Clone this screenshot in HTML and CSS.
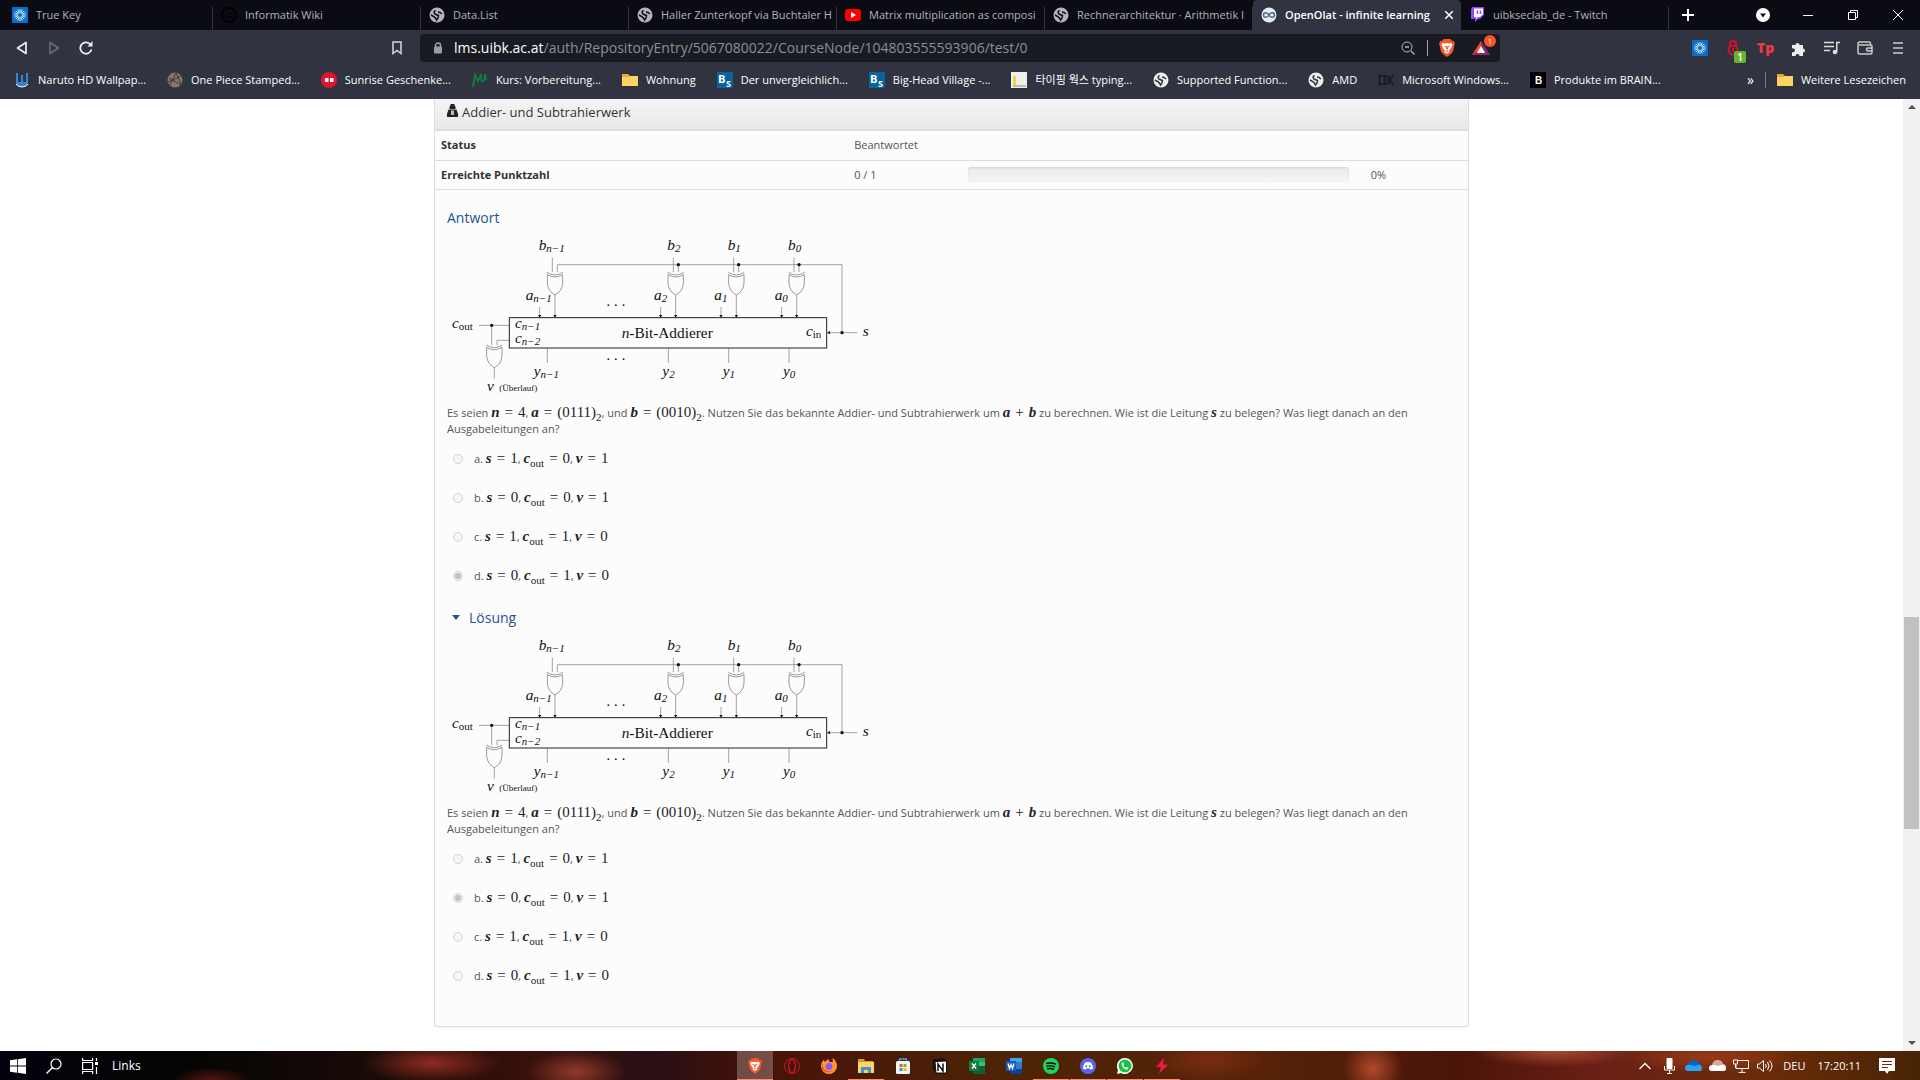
FILE: index.html
```html
<!DOCTYPE html>
<html lang="de">
<head>
<meta charset="utf-8">
<title>OpenOlat - infinite learning</title>
<link rel="stylesheet" href="styles.css">
</head>
<body>
<svg class="defs" aria-hidden="true">
  <defs>
    <symbol id="globe" viewBox="0 0 16 16"><circle cx="8" cy="8" r="7.500" fill="currentColor"/><path d="M6.500 3.500Q4 5 6 7L9.500 8.500 9 11 7.500 13Q6.500 11 5.500 10L2 8M9 5L11 5.500 13 7" fill="none" stroke="var(--hole)" stroke-width="1.500"/></symbol>
    <symbol id="truekey" viewBox="0 0 16 16"><rect width="16" height="16" rx="1" fill="#0a6fc8"/><path d="M8 2v4M8 10v4M2 8h4M10 8h4M3.800 3.800l2.800 2.800M9.400 9.400l2.800 2.800M12.200 3.800L9.400 6.600M6.600 9.400l-2.800 2.800M5.700 2.500l1.500 3.600M10.300 2.500L8.800 6.100M5.700 13.500l1.500-3.600M10.300 13.500L8.800 9.900M2.500 5.700l3.600 1.500M2.500 10.300l3.600-1.500M13.500 5.700L9.900 7.200M13.500 10.300L9.900 8.800" stroke="#e8f4ff" stroke-width=".9"/></symbol>
    <symbol id="folder" viewBox="0 0 16 16"><path d="M0 2h6l2 2h8v10H0z" fill="#e9a93a"/><path d="M0 5h7l1-1h8v10H0z" fill="#fcd462"/></symbol>
    <symbol id="brave" viewBox="0 0 16 18"><path d="M4.500 0h7l1.500 2 1.500-.2L16 4.500l-.7 2L14 12.500 12 15l-4 3-4-3-2-2.500L.7 6.500 0 4.500 1.500 1.800 3 2z" fill="#fb542b"/><path d="M3.500 4l2.500.500L8 4l2 .5 2.500-.5 1 2-2 4-1.500 1.500.8 1.500L8 14.800 5.200 13 6 11.500 4.500 10l-2-4z" fill="#fff"/><path d="M4.500 6.500l2.500.8-.5 1.500zM11.500 6.500L9 7.300l.5 1.500zM7.300 7h1.400l.3 3-1 .8-1-.8zM6.500 12L8 11.300 9.500 12 8 13z" fill="#fb542b"/></symbol>
    <symbol id="bs" viewBox="0 0 16 16"><rect width="16" height="16" fill="#0b639c"/><text x="1" y="11" class="bs-b">B</text><text x="9" y="15" class="bs-s">S</text></symbol>
    <symbol id="xor" viewBox="-26 -12 52 78"><path d="M-24-4Q0 12 24-4M-23 3Q0 17 23 3V30Q20 54 0 64Q-20 54-23 30Z" fill="#fcfcfc" stroke="#666" stroke-width="2"/></symbol>
    <symbol id="circuit" viewBox="21 18 1290 480">
      <g fill="none" stroke="#777" stroke-width="2">
        <path d="M337 83v48M700 83v48M881 83v48M1062 83v48M352 131V104H1206V308M715 104v27M896 104v27M1077 104v27M345 195v60M707 195v60M889 195v60M1070 195v60M299 231v26M662 231v26M843 231v26M1025 231v26M117 286h91M155 286v60M171 346v-15h37M163 412v34M322 355v44M685 355v44M866 355v44M1047 355v44M1168 308h84"/>
      </g>
      <rect x="208" y="263" width="952" height="91" fill="none" stroke="#222" stroke-width="3"/>
      <path d="M294 255h10l-5 8zM340 255h10l-5 8zM657 255h10l-5 8zM702 255h10l-5 8zM838 255h10l-5 8zM884 255h10l-5 8zM1020 255h10l-5 8zM1065 255h10l-5 8zM1170 303v10l-9-5z" fill="#111"/>
      <g fill="#111"><circle cx="715" cy="104" r="5"/><circle cx="896" cy="104" r="5"/><circle cx="1077" cy="104" r="5"/><circle cx="155" cy="286" r="5"/><circle cx="1206" cy="308" r="5"/></g>
      <use href="#xor" x="319" y="119" width="52" height="78"/><use href="#xor" x="681" y="119" width="52" height="78"/><use href="#xor" x="863" y="119" width="52" height="78"/><use href="#xor" x="1044" y="119" width="52" height="78"/><use href="#xor" x="137" y="337" width="52" height="78"/>
    </symbol>
  </defs>
</svg>

<header class="browser">
  <nav class="tabs" aria-label="Tabs">
    <a class="tab first" href="#"><svg class="ico"><use href="#truekey"/></svg><span>True Key</span></a>
    <a class="tab" href="#"><svg class="ico" viewBox="0 0 16 16"><circle cx="8" cy="8" r="7" fill="none" stroke="#000" stroke-width="2"/><path d="M4 10q0-3 3-3 1-3 3 0 3 0 2 3z" fill="none" stroke="#000"/></svg><span>Informatik Wiki</span></a>
    <a class="tab" href="#"><svg class="ico"><use href="#globe"/></svg><span>Data.List</span></a>
    <a class="tab" href="#"><svg class="ico"><use href="#globe"/></svg><span>Haller Zunterkopf via Buchtaler H</span></a>
    <a class="tab" href="#"><svg class="ico" viewBox="0 0 16 16"><rect y="2" width="16" height="12" rx="3" fill="#f00"/><path d="M6 5l5 3-5 3z" fill="#fff"/></svg><span>Matrix multiplication as composi</span></a>
    <a class="tab" href="#"><svg class="ico"><use href="#globe"/></svg><span>Rechnerarchitektur · Arithmetik I</span></a>
    <a class="tab active" href="#"><svg class="ico" viewBox="0 0 16 16"><circle cx="8" cy="8" r="7.500" fill="#e8ecf2"/><path d="M8 8C6.500 5 2.500 5 2.500 8S6.500 11 8 8s5.500-3 5.500 0S9.500 11 8 8" fill="none" stroke="#48678c" stroke-width="1.500"/></svg><span>OpenOlat - infinite learning</span><svg class="x" viewBox="0 0 8 8"><path d="M0 0l8 8M8 0L0 8" stroke="#fff" stroke-width="1.500"/></svg></a>
    <a class="tab" href="#"><svg class="ico" viewBox="0 0 16 16"><path d="M3 0h12v8l-4 4H9l-3 3v-3H2V3z" fill="#9146ff"/><path d="M5 1.500h9V7l-3 3H9l-2 2v-2H5z" fill="#fff"/><path d="M8.500 3.500v3.500M11.500 3.500v3.500" stroke="#9146ff" stroke-width="1.500"/></svg><span>uibkseclab_de - Twitch</span></a>
    <button class="newtab" aria-label="Neuer Tab"><svg width="12" height="12" viewBox="0 0 12 12"><path d="M6 0v12M0 6h12" stroke="#fff" stroke-width="2"/></svg></button>
    <div class="winbtns">
      <button aria-label="Tabs suchen"><svg width="14" height="14" viewBox="0 0 14 14"><circle cx="7" cy="7" r="7" fill="#fff"/><path d="M4 5.500h6L7 9.500z" fill="#111"/></svg></button>
      <button aria-label="Minimieren"><svg width="10" height="10" viewBox="0 0 10 10"><path d="M0 5.500h10" stroke="#fff"/></svg></button>
      <button aria-label="Verkleinern"><svg width="10" height="10" viewBox="0 0 10 10"><path d="M.5 2.500h7v7h-7zM2.500 2.500v-2h7v7h-2" fill="none" stroke="#fff"/></svg></button>
      <button aria-label="Schließen"><svg width="10" height="10" viewBox="0 0 10 10"><path d="M0 0l10 10M10 0L0 10" stroke="#fff"/></svg></button>
    </div>
  </nav>
  <div class="toolbar">
    <div class="navbtns">
      <button aria-label="Zurück"><svg width="12" height="14" viewBox="0 0 12 14"><path d="M10 1.500v11L1.500 7z" fill="none" stroke="#eee" stroke-width="1.700" stroke-linejoin="round"/></svg></button>
      <button aria-label="Vorwärts"><svg width="12" height="14" viewBox="0 0 12 14"><path d="M2 1.500v11L10.500 7z" fill="none" stroke="#6c6e79" stroke-width="1.500" stroke-linejoin="round"/></svg></button>
      <button aria-label="Neu laden"><svg width="14" height="14" viewBox="0 0 14 14"><path d="M12.500 8.500A5.700 5.700 0 1 1 11.500 3.500" fill="none" stroke="#eee" stroke-width="1.800"/><path d="M13.500 0v5.500H8.500z" fill="#eee"/></svg></button>
    </div>
    <button class="mark" aria-label="Lesezeichen"><svg width="10" height="14" viewBox="0 0 10 14"><path d="M1 1h8v11.500L5 9.500l-4 3z" fill="none" stroke="#d8d8dc" stroke-width="1.500"/></svg></button>
    <div class="address">
      <svg width="10" height="12" viewBox="0 0 10 12"><path d="M2.500 5V3.500a2.500 2.500 0 0 1 5 0V5" fill="none" stroke="#9b9da4" stroke-width="1.500"/><rect x="1" y="4.500" width="8" height="7" rx="1" fill="#9b9da4"/></svg>
      <a class="url" href="#"><b>lms.uibk.ac.at</b>/auth/RepositoryEntry/5067080022/CourseNode/104803555593906/test/0</a>
      <svg class="mag" width="14" height="14" viewBox="0 0 14 14"><circle cx="6" cy="6" r="5" fill="none" stroke="#b4b5ba"/><path d="M10 10l3.500 3.500M4 6h4" stroke="#b4b5ba" stroke-width="1.300"/></svg>
      <i class="vline"></i>
      <svg width="16" height="18"><use href="#brave"/></svg>
      <span class="bat"><svg width="18" height="16" viewBox="0 0 18 16"><path d="M9 1L0 15h18z" fill="#ff4724"/><path d="M0 15h18l-4-3H4z" fill="#9e1f63"/><path d="M18 15L9 1v4l4 7z" fill="#662d91"/><path d="M9 6l4 7H5z" fill="#fff"/></svg><em>1</em></span>
    </div>
    <div class="exts">
      <button aria-label="True Key"><svg class="ico"><use href="#truekey"/></svg></button>
      <button class="lockext" aria-label="Blocker"><svg width="12" height="16" viewBox="0 0 12 16"><path d="M3 7V4a3 3 0 0 1 6 0v3" fill="none" stroke="#d3122a" stroke-width="2"/><circle cx="6" cy="10" r="4.500" fill="none" stroke="#d3122a" stroke-width="2"/><path d="M6 8v4" stroke="#d3122a" stroke-width="2"/></svg><em>1</em></button>
      <button class="tp" aria-label="Teleparty">Tp</button>
      <button aria-label="Erweiterungen"><svg width="15" height="15" viewBox="0 0 15 15"><path d="M1 4h3.500a2 2 0 1 1 4 0H12v3.500a2 2 0 1 1 0 4V15H8.500a2 2 0 1 0-4 0H1v-4a2 2 0 1 0 0-3.500z" fill="#eee"/></svg></button>
      <button aria-label="Medien"><svg width="16" height="14" viewBox="0 0 16 14"><path d="M0 1.500h10M0 5.500h10M0 9.500h6M12.800 11V1.500H16" fill="none" stroke="#ddd" stroke-width="1.500"/><circle cx="11" cy="11" r="2.300" fill="#ddd"/></svg></button>
      <button aria-label="Wallet"><svg width="16" height="14" viewBox="0 0 16 14"><path d="M13.500 4V2.500a1.500 1.500 0 0 0-1.500-1.500H3a2 2 0 0 0-2 2v8a2 2 0 0 0 2 2h10.500a1.500 1.500 0 0 0 1.500-1.500V5.500A1.500 1.500 0 0 0 13.500 4H2M15 7h-4a1.500 1.500 0 0 0 0 3h4" fill="none" stroke="#ccc" stroke-width="1.500"/></svg></button>
      <button aria-label="Menü"><svg width="10" height="12" viewBox="0 0 10 12"><path d="M0 1h10M0 6h10M0 11h10" stroke="#ccc" stroke-width="1.500"/></svg></button>
    </div>
  </div>
  <nav class="bookmarks" aria-label="Lesezeichen">
    <a href="#"><svg class="ico" viewBox="0 0 16 16"><path d="M2 1v10q0 4 6 4t6-4V1h-2v9h-3V3H7v7H4V1z" fill="#3b82d0"/><path d="M2 12q2 3 6 3t6-3" fill="none" stroke="#fff"/></svg>Naruto HD Wallpap...</a>
    <a href="#"><svg class="ico" viewBox="0 0 16 16"><circle cx="8" cy="8" r="7.500" fill="#83786a"/><path d="M1 10L14 4M3 13L9 1l5 11M2 6l12 7" stroke="#3d3833" fill="none"/></svg>One Piece Stamped...</a>
    <a href="#"><svg class="ico" viewBox="0 0 16 16"><circle cx="8" cy="8" r="8" fill="#e2142d"/><path d="M4 6h3.500v4H4zM9 6h3.500v4H9z" fill="#fff"/></svg>Sunrise Geschenke...</a>
    <a href="#"><svg class="ico" viewBox="0 0 16 16"><path d="M1 15L3 3l3 6 3-7v6q1 3 3 0l1-6 1 6" fill="none" stroke="#118036" stroke-width="1.800"/></svg>Kurs: Vorbereitung...</a>
    <a href="#"><svg class="ico"><use href="#folder"/></svg>Wohnung</a>
    <a href="#"><svg class="ico"><use href="#bs"/></svg>Der unvergleichlich...</a>
    <a href="#"><svg class="ico"><use href="#bs"/></svg>Big-Head Village -...</a>
    <a href="#"><svg class="ico" viewBox="0 0 16 16"><rect width="16" height="16" fill="#f1efe8"/><path d="M3.500 4v9" stroke="#f2c500" stroke-width="2"/><path d="M2 14h13" stroke="#8a887e"/></svg>타이핑 웍스 typing...</a>
    <a href="#"><svg class="ico light"><use href="#globe"/></svg>Supported Function...</a>
    <a href="#"><svg class="ico light"><use href="#globe"/></svg>AMD</a>
    <a href="#"><svg class="ico" viewBox="0 0 16 16"><path d="M4.500 5V3.500h-3v9h3V11M6.500 3.500v9h1.500l1.500-2v-5L8 3.500zM11.500 3v10M15.500 3l-3.500 5 3.500 5" fill="none" stroke="#17181f" stroke-width="1.400"/></svg>Microsoft Windows...</a>
    <a href="#"><svg class="ico" viewBox="0 0 16 16"><rect width="16" height="16" fill="#000"/><text x="5" y="12" class="brain">B</text></svg>Produkte im BRAIN...</a>
    <button class="more" aria-label="Mehr">»</button>
    <i class="vline"></i>
    <a class="last" href="#"><svg class="ico"><use href="#folder"/></svg>Weitere Lesezeichen</a>
  </nav>
</header>

<div class="view">
<main>
  <section class="panel">
    <h1><svg width="11" height="13" viewBox="0 0 11 13"><path d="M3.500 0h4v1.500l1 1V5h-6V2.500l1-1zM1.500 5.500h8L11 10v3H0v-3z" fill="#222"/><path d="M4 6.500h3V11H4z" fill="#bbb"/></svg>Addier- und Subtrahierwerk</h1>
    <table>
      <colgroup><col class="c1"><col class="c2"><col class="c3"><col></colgroup>
      <tr><th scope="row">Status</th><td colspan="3">Beantwortet</td></tr>
      <tr><th scope="row">Erreichte Punktzahl</th><td>0 / 1</td><td><div class="bar"></div></td><td>0%</td></tr>
    </table>
    <div class="body">
      <h2>Antwort</h2>
      <svg class="diagram" viewBox="21 18 1290 480" role="img" aria-label="n-Bit-Addierer">
        <use href="#circuit" x="21" y="18" width="1290" height="480"/>
        <text x="296" y="60">b<tspan class="sub" dy="6">n−1</tspan></text><text x="682" y="60">b<tspan class="sub" dy="6">2</tspan></text><text x="863" y="60">b<tspan class="sub" dy="6">1</tspan></text><text x="1044" y="60">b<tspan class="sub" dy="6">0</tspan></text>
        <text x="257" y="211">a<tspan class="sub" dy="6">n−1</tspan></text><text x="642" y="211">a<tspan class="sub" dy="6">2</tspan></text><text x="823" y="211">a<tspan class="sub" dy="6">1</tspan></text><text x="1004" y="211">a<tspan class="sub" dy="6">0</tspan></text>
        <text x="36" y="294">c<tspan class="sub up" dy="6">out</tspan></text><text x="225" y="294">c<tspan class="sub" dy="6">n−1</tspan></text><text x="225" y="339">c<tspan class="sub" dy="6">n−2</tspan></text><text x="1098" y="317">c<tspan class="sub up" dy="6">in</tspan></text><text x="1268" y="318">s</text>
        <text x="545" y="324">n<tspan class="up">-Bit-Addierer</tspan></text><text x="500" y="229">. . .</text><text x="500" y="389">. . .</text>
        <text x="281" y="437">y<tspan class="sub" dy="6">n−1</tspan></text><text x="667" y="437">y<tspan class="sub" dy="6">2</tspan></text><text x="848" y="437">y<tspan class="sub" dy="6">1</tspan></text><text x="1029" y="437">y<tspan class="sub" dy="6">0</tspan></text>
        <text x="141" y="482">v</text><text x="178" y="482" class="tiny">(Überlauf)</text>
      </svg>
      <p>Es seien <span class="m"><i>n</i><u>=</u>4</span>, <span class="m"><i>a</i><u>=</u>(0111)<sub>2</sub></span>, und <span class="m"><i>b</i><u>=</u>(0010)<sub>2</sub></span>. Nutzen Sie das bekannte Addier- und Subtrahierwerk um <span class="m"><i>a</i><u>+</u><i>b</i></span> zu berechnen. Wie ist die Leitung <span class="m"><i>s</i></span> zu belegen? Was liegt danach an den Ausgabeleitungen an?</p>
      <div class="options">
        <label><input type="radio" name="antwort" disabled><span>a. <span class="m"><i>s</i><u>=</u>1</span>, <span class="m"><i>c</i><sub>out</sub><u>=</u>0</span>, <span class="m"><i>v</i><u>=</u>1</span></span></label>
        <label><input type="radio" name="antwort" disabled><span>b. <span class="m"><i>s</i><u>=</u>0</span>, <span class="m"><i>c</i><sub>out</sub><u>=</u>0</span>, <span class="m"><i>v</i><u>=</u>1</span></span></label>
        <label><input type="radio" name="antwort" disabled><span>c. <span class="m"><i>s</i><u>=</u>1</span>, <span class="m"><i>c</i><sub>out</sub><u>=</u>1</span>, <span class="m"><i>v</i><u>=</u>0</span></span></label>
        <label><input type="radio" name="antwort" disabled checked><span>d. <span class="m"><i>s</i><u>=</u>0</span>, <span class="m"><i>c</i><sub>out</sub><u>=</u>1</span>, <span class="m"><i>v</i><u>=</u>0</span></span></label>
      </div>
      <details open>
      <summary>Lösung</summary>
      <svg class="diagram" viewBox="21 18 1290 480" role="img" aria-label="n-Bit-Addierer">
        <use href="#circuit" x="21" y="18" width="1290" height="480"/>
        <text x="296" y="60">b<tspan class="sub" dy="6">n−1</tspan></text><text x="682" y="60">b<tspan class="sub" dy="6">2</tspan></text><text x="863" y="60">b<tspan class="sub" dy="6">1</tspan></text><text x="1044" y="60">b<tspan class="sub" dy="6">0</tspan></text>
        <text x="257" y="211">a<tspan class="sub" dy="6">n−1</tspan></text><text x="642" y="211">a<tspan class="sub" dy="6">2</tspan></text><text x="823" y="211">a<tspan class="sub" dy="6">1</tspan></text><text x="1004" y="211">a<tspan class="sub" dy="6">0</tspan></text>
        <text x="36" y="294">c<tspan class="sub up" dy="6">out</tspan></text><text x="225" y="294">c<tspan class="sub" dy="6">n−1</tspan></text><text x="225" y="339">c<tspan class="sub" dy="6">n−2</tspan></text><text x="1098" y="317">c<tspan class="sub up" dy="6">in</tspan></text><text x="1268" y="318">s</text>
        <text x="545" y="324">n<tspan class="up">-Bit-Addierer</tspan></text><text x="500" y="229">. . .</text><text x="500" y="389">. . .</text>
        <text x="281" y="437">y<tspan class="sub" dy="6">n−1</tspan></text><text x="667" y="437">y<tspan class="sub" dy="6">2</tspan></text><text x="848" y="437">y<tspan class="sub" dy="6">1</tspan></text><text x="1029" y="437">y<tspan class="sub" dy="6">0</tspan></text>
        <text x="141" y="482">v</text><text x="178" y="482" class="tiny">(Überlauf)</text>
      </svg>
      <p>Es seien <span class="m"><i>n</i><u>=</u>4</span>, <span class="m"><i>a</i><u>=</u>(0111)<sub>2</sub></span>, und <span class="m"><i>b</i><u>=</u>(0010)<sub>2</sub></span>. Nutzen Sie das bekannte Addier- und Subtrahierwerk um <span class="m"><i>a</i><u>+</u><i>b</i></span> zu berechnen. Wie ist die Leitung <span class="m"><i>s</i></span> zu belegen? Was liegt danach an den Ausgabeleitungen an?</p>
      <div class="options">
        <label><input type="radio" name="loesung" disabled><span>a. <span class="m"><i>s</i><u>=</u>1</span>, <span class="m"><i>c</i><sub>out</sub><u>=</u>0</span>, <span class="m"><i>v</i><u>=</u>1</span></span></label>
        <label><input type="radio" name="loesung" disabled checked><span>b. <span class="m"><i>s</i><u>=</u>0</span>, <span class="m"><i>c</i><sub>out</sub><u>=</u>0</span>, <span class="m"><i>v</i><u>=</u>1</span></span></label>
        <label><input type="radio" name="loesung" disabled><span>c. <span class="m"><i>s</i><u>=</u>1</span>, <span class="m"><i>c</i><sub>out</sub><u>=</u>1</span>, <span class="m"><i>v</i><u>=</u>0</span></span></label>
        <label><input type="radio" name="loesung" disabled><span>d. <span class="m"><i>s</i><u>=</u>0</span>, <span class="m"><i>c</i><sub>out</sub><u>=</u>1</span>, <span class="m"><i>v</i><u>=</u>0</span></span></label>
      </div>
      </details>
    </div>
  </section>
</main>
<div class="scroll" aria-hidden="true"><i class="arrow up-arrow"></i><div class="track"><i class="thumb"></i></div><i class="arrow down-arrow"></i></div>
</div>

<footer class="taskbar">
  <div class="left">
    <button aria-label="Start"><svg width="16" height="16" viewBox="0 0 16 16"><path d="M0 2.300L7 1.300V7.600H0zM7.800 1.200L16 0v7.600H7.800zM0 8.400h7v6.300L0 13.700zM7.800 8.400H16V16L7.800 14.800z" fill="#fff"/></svg></button>
    <button aria-label="Suche"><svg width="16" height="16" viewBox="0 0 16 16"><circle cx="10" cy="6" r="5" fill="none" stroke="#fff" stroke-width="1.200"/><path d="M6.500 9.500L.5 15.500" stroke="#fff" stroke-width="1.400"/></svg></button>
    <button aria-label="Taskansicht"><svg width="16" height="16" viewBox="0 0 16 16"><path d="M.6 0v2.500h10V0M.6 16v-2.500h10V16M.6 4.500h10v7H.6zM14.500 0v3M14.500 9v7" fill="none" stroke="#fff" stroke-width="1.200"/><path d="M13 4h3v3h-3z" fill="#fff"/></svg></button>
    <span>Links</span>
  </div>
  <div class="apps">
    <button class="on" aria-label="Brave"><svg width="14" height="16"><use href="#brave"/></svg></button>
    <button aria-label="Opera"><svg class="ico" viewBox="0 0 16 16"><ellipse cx="8" cy="8" rx="7.500" ry="7.500" fill="none" stroke="#c4152f"/><ellipse cx="8" cy="8" rx="3.500" ry="6.500" fill="none" stroke="#c4152f" stroke-width="1.300"/></svg></button>
    <button aria-label="Firefox"><svg class="ico" viewBox="0 0 16 16"><path d="M1 4l1.500-2L4 4q1-2 4-3-1 2 1 3l3 0q-1-2 0-4 4 4 4 8a8 8 0 0 1-16 0Q0 6 1 4z" fill="#ff9a1f"/><path d="M1 10a7.500 7.500 0 0 0 13 1q-3 4-8 2Q2 12 1 6z" fill="#f3304f"/><circle cx="8" cy="8.500" r="3.500" fill="#9059ff"/></svg></button>
    <button class="run" aria-label="Explorer"><svg class="ico" viewBox="0 0 16 16"><path d="M0 1h6l1 2h8v4H0z" fill="#d99a18"/><path d="M0 4h16v11H0z" fill="#ffd264"/><path d="M3 15V9h10v6h-3v-3H6v3z" fill="#3c93d8"/></svg></button>
    <button aria-label="Store"><svg class="ico" viewBox="0 0 16 16"><path d="M4.500 4V1h7v3" fill="none" stroke="#38a9e8" stroke-width="1.300"/><rect x="1" y="3" width="14" height="13" rx="1.500" fill="#f4f4f4"/><path d="M4.500 6h3v3h-3z" fill="#f25022"/><path d="M8.500 6h3v3h-3z" fill="#7fba00"/><path d="M4.500 10h3v3h-3z" fill="#00a4ef"/><path d="M8.500 10h3v3h-3z" fill="#ffb900"/></svg></button>
    <button aria-label="Notion"><svg class="ico" viewBox="0 0 16 16"><path d="M1 1l11-.5L15 3v12.500H4L1 12z" fill="#111"/><path d="M3 3.500l11.500-.5V15H4z" fill="#fff" stroke="#111"/><path d="M6 13V6l5 7V5.500" fill="none" stroke="#111" stroke-width="1.500"/></svg></button>
    <button aria-label="Excel"><svg class="ico" viewBox="0 0 16 16"><path d="M4 0h12v16H4z" fill="#21a366"/><path d="M4 8h12v8H4z" fill="#185c37"/><path d="M10 4h6v4h-6z" fill="#33c481"/><path d="M0 3h10v10H0z" fill="#107c41"/><path d="M3 5.500l4 5M7 5.500l-4 5" stroke="#fff" stroke-width="1.400"/></svg></button>
    <button aria-label="Word"><svg class="ico" viewBox="0 0 16 16"><path d="M4 0h12v16H4z" fill="#41a5ee"/><path d="M4 4h12v12H4z" fill="#2b7cd3"/><path d="M4 11h12v5H4z" fill="#103f91"/><path d="M0 3h10v10H0z" fill="#185abd"/><path d="M2 5.500l1.500 5L5 6.500l1.500 4L8 5.500" fill="none" stroke="#fff" stroke-width="1.300"/></svg></button>
    <button class="run" aria-label="Spotify"><svg class="ico" viewBox="0 0 16 16"><circle cx="8" cy="8" r="8" fill="#1ed760"/><path d="M3 5.500q5-1.500 10 .8M3.500 8.200q4.500-1.200 8.500.8M4 10.800q4-1 7 .7" fill="none" stroke="#111" stroke-width="1.500"/></svg></button>
    <button class="run" aria-label="Discord"><svg class="ico" viewBox="0 0 16 16"><circle cx="8" cy="8" r="8" fill="#5865f2"/><path d="M5 4.500q3-.8 6 0 2 3 2 6-1 1-2.500 1l-.8-1H6.300l-.8 1Q4 11.500 3 10.500q0-3 2-6z" fill="#fff"/><circle cx="6.200" cy="8.200" r="1" fill="#5865f2"/><circle cx="9.800" cy="8.200" r="1" fill="#5865f2"/></svg></button>
    <button class="run" aria-label="WhatsApp"><svg class="ico" viewBox="0 0 16 16"><path d="M8 0a8 8 0 1 1-4 15L0 16l1-4A8 8 0 0 1 8 0z" fill="#fff"/><circle cx="8" cy="8" r="6.500" fill="#1fc04a"/><path d="M5 4.500q-1 1.500.5 4t4 3q1.500 0 2-1.500L9.500 9l-1 .8Q7 9 6.300 7.500L7 6.500 6.200 4.500z" fill="#fff"/></svg></button>
    <button class="run" aria-label="Blitz"><svg class="ico" viewBox="0 0 16 16"><path d="M10 0L2 9h5l-2 7 9-9.500H9z" fill="#f0184a"/></svg></button>
  </div>
  <div class="tray">
    <button aria-label="Ausgeblendete Symbole"><svg width="12" height="8" viewBox="0 0 12 8"><path d="M.5 7L6 1.500 11.500 7" fill="none" stroke="#fff" stroke-width="1.300"/></svg></button>
    <button aria-label="Mikrofon"><svg width="11" height="16" viewBox="0 0 11 16"><rect x="2.500" width="6" height="11" rx="1" fill="#fff"/><path d="M.5 8v4h10V8M5.500 12v3M3 15.500h5" fill="none" stroke="#fff"/></svg></button>
    <button aria-label="OneDrive"><svg width="17" height="11" viewBox="0 0 17 11"><path d="M3 5q1-5 5.500-5T14 4q3 0 3 4 0 3-3 3H3q-3 0-3-3t3-3z" fill="#0a64c0"/><path d="M0 8q1-4 5-3l5 1 4-1.500q3 1 3 4 0 2.500-3 2.500H3q-3 0-3-3z" fill="#2aa3ec"/></svg></button>
    <button aria-label="Cloud"><svg width="17" height="11" viewBox="0 0 17 11"><path d="M3 5q1-5 5.500-5T14 4q3 0 3 4 0 3-3 3H3q-3 0-3-3t3-3z" fill="#d2aca0"/><path d="M0 8q1-3 4-3 3-.5 5 1l5-1.500q3 1 3 4 0 2.500-3 2.500H3q-3 0-3-3z" fill="#fff"/></svg></button>
    <button aria-label="Netzwerk"><svg width="16" height="14" viewBox="0 0 16 14"><path d="M5 1.500h10.500v8H3V6M9 9.500V13M5.500 13.400h7M.5 1h4v4h-4zM2.500 5v4" fill="none" stroke="#fff"/></svg></button>
    <button aria-label="Lautstärke"><svg width="17" height="14" viewBox="0 0 17 14"><path d="M.5 5v4h2l4 3.500v-11L2.500 5zM8.500 5q1.500 2 0 4M10.500 3q3 4 0 8M12.500 1.500q5 5.500 0 11" fill="none" stroke="#fff"/></svg></button>
    <span class="lang">DEU</span>
    <time>17:20:11</time>
    <button class="note" aria-label="Benachrichtigungen"><svg width="16" height="16" viewBox="0 0 16 16"><path d="M0 0h16v13h-6l-2 3-2-3H0z" fill="#fff"/><path d="M3 3.500h10M3 6.500h10M3 9.500h6" stroke="#7a2a10" stroke-width="1.200"/></svg></button>
  </div>
</footer>
</body>
</html>
```

FILE: styles.css
```css
* { box-sizing: border-box; }
body { margin: 0; min-height: 100vh; display: flex; flex-direction: column; background: #fff; color: #555; font: 11px/16px "Open Sans", sans-serif; }
button { border: 0; padding: 0; background: none; color: inherit; font: inherit; display: flex; align-items: center; justify-content: center; }
a { color: inherit; text-decoration: none; }
svg { flex: none; display: block; }
.defs { position: absolute; width: 0; height: 0; }
.ico { width: 16px; height: 16px; }
.vline { width: 1px; height: 16px; background: #777984; }

/* browser chrome */
.browser { background: #313341; color: #fff; font: 11px/16px "Open Sans", "Noto Sans CJK KR", sans-serif; }
.tabs { display: flex; height: 30px; background: #0b0b14; color: #b4b4b8; }
.tab { --hole: #0b0b14; position: relative; display: flex; align-items: center; gap: 8px; flex: 0 1 208px; min-width: 0; padding: 0 4px 0 8px; }
.tab::after { content: ""; position: absolute; right: 0; top: 7px; bottom: 0; width: 1px; background: #34353e; }
.tab.first { flex-basis: 213px; padding-left: 12px; }
.tab span { flex: 1; overflow: hidden; white-space: nowrap; }
.tab.active { background: #313341; color: #fff; font-weight: 600; border-radius: 4px 4px 0 0; padding-right: 8px; }
.tab.active::after { display: none; }
.x { width: 8px; height: 8px; }
.newtab { width: 38px; }
.winbtns { display: flex; margin-left: auto; }
.winbtns button { width: 45px; }
.toolbar { display: flex; align-items: center; padding: 4px 6px 0; }
.navbtns { display: flex; }
.navbtns button { width: 32px; }
.mark { margin-left: auto; width: 46px; }
.address { flex: 0 1 1080px; height: 28px; background: #191b22; border-radius: 4px; display: flex; align-items: center; padding: 0 8px 0 13px; }
.url { margin-left: 11px; flex: 1; font-size: 14px; line-height: 20px; color: #8d8e93; white-space: nowrap; overflow: hidden; }
.url b { color: #fff; font-weight: 400; }
.mag { margin-right: 12px; }
.address .vline { margin-right: 11px; background: #a0a1a6; }
.bat { position: relative; margin: 0 2px 0 17px; }
.bat em { position: absolute; top: -5px; right: -6px; width: 12px; height: 12px; border-radius: 6px; background: #fb542b; color: #fff; font: 8px/12px "Open Sans", sans-serif; text-align: center; }
.exts { display: flex; margin-left: 183px; }
.exts button { width: 33px; height: 24px; }
.lockext { position: relative; }
.lockext em { position: absolute; right: 3px; bottom: -3px; width: 12px; height: 12px; border-radius: 2px; background: #67b52f; font: 600 10px/12px "Open Sans", sans-serif; }
.exts .tp { color: #ee3a3e; font-weight: 800; font-size: 14px; }
.bookmarks { --hole: #313341; display: flex; align-items: center; height: 37px; padding: 0 14px 2px; overflow: hidden; }
.bookmarks a { display: flex; align-items: center; gap: 8px; white-space: nowrap; margin-right: 21px; }
.bookmarks .more { margin-left: auto; margin-right: 11px; font-size: 14px; }
.bookmarks .last { margin: 0 0 0 11px; }
.light { color: #eee; }
.bs-b { font: 700 11px "Open Sans", sans-serif; fill: #fff; }
.bs-s { font: 700 9px "Open Sans", sans-serif; fill: #fff; }
.brain { font: 700 10px "Liberation Sans", sans-serif; fill: #fff; }

/* page */
.view { flex: 1; display: flex; }
main { flex: 1; }
.panel { max-width: 1035px; margin: 0 auto 24px; border: 1px solid #ddd; border-top: 0; border-radius: 0 0 4px 4px; background: #fcfcfc; box-shadow: 0 1px 1px rgba(0,0,0,.05); }
h1 { margin: 0; height: 32px; padding: 5px 12px 0; display: flex; gap: 4px; font: 13px/16px "Open Sans", sans-serif; color: #333; border-bottom: 2px solid #ddd; background: linear-gradient(#f5f5f5, #e8e8e8); }
table { width: 100%; table-layout: fixed; border-collapse: collapse; }
.c1 { width: 40%; }
.c2 { width: 11%; }
.c3 { width: 39%; }
tr { height: 29px; }
th, td { padding: 6px; text-align: left; border-bottom: 1px solid #ddd; }
th { color: #333; }
.bar { height: 16px; margin-right: 10px; border-radius: 3px; background: linear-gradient(#ebebeb, #f5f5f5); box-shadow: inset 0 1px 2px rgba(0,0,0,.1); }
.body { padding: 18px 12px 18px; }
h2, summary { margin: 0; font: 14px/20px "Open Sans", sans-serif; color: #1f5394; }
summary { display: flex; align-items: center; gap: 9px; padding-left: 5px; }
summary::before { content: ""; border: 4px solid transparent; border-top: 5px solid #1f5394; border-bottom: 0; }
.diagram { width: 430px; height: 160px; margin-top: 8px; font: italic 46px "Liberation Serif", serif; fill: #111; }
.sub { font-size: 33px; }
.up { font-style: normal; }
.tiny { font-size: 27px; font-style: normal; }
p { margin: 9px 0 3px; max-width: 990px; }
.m { font: 15px/14px "Liberation Serif", serif; color: #222; white-space: nowrap; }
.m i { font-weight: 700; }
.m u { text-decoration: none; margin: 0 5px; }
.m sub { font-size: 11px; line-height: 0; vertical-align: -4px; }
.options { margin-bottom: 12px; }
.options label { display: flex; align-items: center; gap: 11px; height: 39px; padding-left: 6px; }
.options input { appearance: none; width: 10px; height: 10px; margin: 0; border: 1px solid #d4d4d4; border-radius: 50%; background: #f6f6f6; }
.options input:checked { background: radial-gradient(circle, #c4c4c4 0 3px, #f6f6f6 3px); }

.scroll { width: 17px; background: #f1f1f1; display: flex; flex-direction: column; align-items: center; padding: 6px 0; }
.track { flex: 1; width: 15px; display: flex; flex-direction: column; }
.track::before { content: ""; flex: 507; }
.thumb { flex: 212; background: #c1c1c1; }
.track::after { content: ""; flex: 211; }
.arrow { border: 4px solid transparent; }
.up-arrow { border-top: 0; border-bottom-color: #505050; }
.down-arrow { border-bottom: 0; border-top-color: #505050; }

/* taskbar */
.taskbar { height: 30px; display: flex; color: #fff; font: 12px/16px "Open Sans", sans-serif;
  background:
    radial-gradient(ellipse 70px 20px at 22.500% 40%, #8e2a20, transparent),
    radial-gradient(ellipse 40px 14px at 11% 100%, #5a1611, transparent),
    radial-gradient(ellipse 50px 22px at 30% 70%, #8f3a2a, transparent),
    radial-gradient(ellipse 60px 22px at 63% 30%, #7c2c12, transparent),
    radial-gradient(ellipse 30px 30px at 71.500% 60%, #b04a2c, transparent),
    radial-gradient(ellipse 80px 16px at 81% 0%, #a84a30, transparent),
    radial-gradient(ellipse 90px 16px at 89% 20%, #9a3a18, transparent),
    linear-gradient(to right, #02020c 0, #060504 10%, #1a0b08 20%, #3a100c 28%, #280f14 34%, #481208 40%, #4c2406 52%, #562208 66%, #4a1408 76%, #6a1f16 83%, #6a2c08 92%, #482406 100%); }
.taskbar button { height: 30px; }
.left, .apps, .tray { display: flex; align-items: center; }
.left { width: 38.4%; }
.left button { width: 36px; }
.left span { margin-left: 4px; }
.apps { gap: 1px; }
.apps button { width: 36px; border: solid transparent; border-width: 2px 0; }
.apps .run, .apps .on { border-bottom-color: #ff8a6c; }
.apps .on { background-color: rgba(255,255,255,.25); }
.tray { flex: 1; justify-content: flex-end; padding-right: 25px; font-size: 11px; }
.tray button { width: 24px; }
.lang { margin-left: 6px; }
time { margin: 0 18px 0 12px; }
.tray .note { width: 16px; }
```
